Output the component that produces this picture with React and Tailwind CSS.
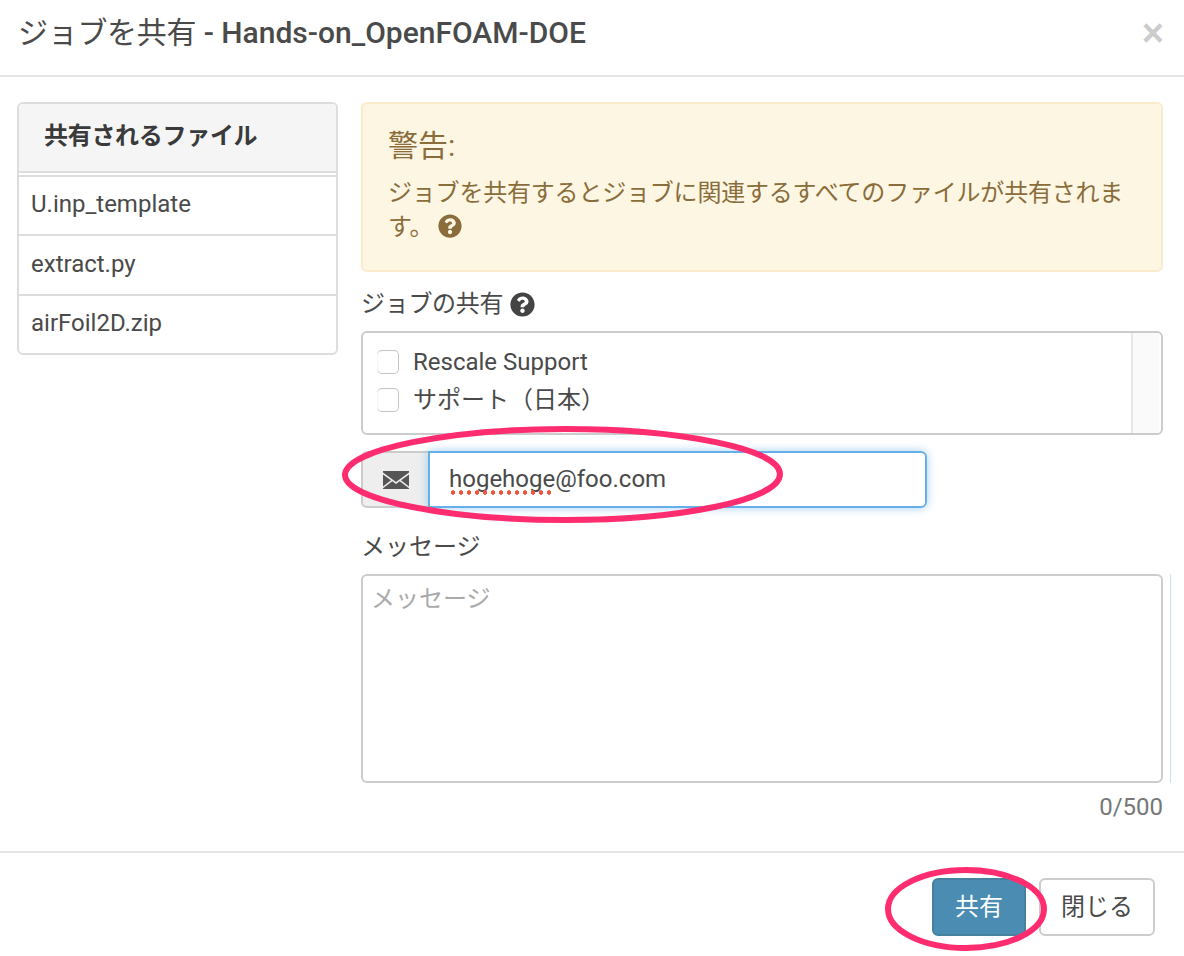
import { FaQuestionCircle } from "react-icons/fa";

const font = "font-['Roboto','Noto_Sans_CJK_JP',sans-serif]";

function Envelope() {
  return (
    <svg width="26" height="18" viewBox="0 0 26 18" fill="#555">
      <path d="M0 1.5 L13 11 L26 1.5 L26 0 L0 0 Z" />
      <path d="M0 3.5 L0 15.5 L8 9.3 Z" />
      <path d="M26 3.5 L26 15.5 L18 9.3 Z" />
      <path d="M9.3 10.3 L0 17.3 L0 18 L26 18 L26 17.3 L16.7 10.3 L13 13 Z" />
    </svg>
  );
}

function CheckRow({ label }) {
  return (
    <div className="flex h-[38px] items-center">
      <span className="h-6 w-[22px] rounded-[5px] border border-l-0 border-[#c4c4c4] bg-white shadow-[inset_1px_0_2px_rgba(0,0,0,0.04)]" />
      <span className="ml-[14px] text-2xl">{label}</span>
    </div>
  );
}

export default function App() {
  return (
    <div className={`${font} relative h-[956px] w-[1184px] overflow-hidden bg-white text-[#4a4a4a]`}>
      <header className="flex h-[77px] items-center justify-between border-b-2 border-[#e5e5e5] pb-[10px] pl-[18px] pr-[20px]">
        <h1 className="text-[30px] font-medium leading-[40px] text-[#4a4a4a]">
          <span className="font-normal tracking-[-0.3px]">ジョブを共有</span> - Hands-on_OpenFOAM-DOE
        </h1>
        <span className="font-['Liberation_Sans',sans-serif] text-[38px] font-bold leading-none text-[#ccc]">×</span>
      </header>

      <main className="flex h-[776px] gap-[23px] border-b-2 border-[#e5e5e5] pl-[17px] pr-[21px] pt-[25px]">
        <aside className="w-[321px] shrink-0">
          <div className="overflow-hidden rounded-[6px] border-2 border-[#ddd]">
            <div className="flex h-[69px] items-center border-b-2 border-[#ddd] bg-[#f5f5f5] pb-[3px] pl-[25px] text-2xl font-bold tracking-[-0.3px] text-[#3a3a3a]">
              共有されるファイル
            </div>
            <div className="mt-[2px] border-t-2 border-[#ddd]">
              {[
                ["U.inp_template", "h-[59px] border-b-2 border-[#ddd]"],
                ["extract.py", "h-[60px] border-b-2 border-[#ddd]"],
                ["airFoil2D.zip", "h-[57px]"],
              ].map(([file, rowClass]) => (
                <div key={file} className={`flex items-center pb-[3px] pl-[12px] text-2xl ${rowClass}`}>
                  {file}
                </div>
              ))}
            </div>
          </div>
        </aside>

        <section className="min-w-0 flex-1">
          <div className="h-[170px] rounded-[6px] border-2 border-[#faebcc] bg-[#fdf6e3] pl-[26px] pr-[20px] pt-[22px] text-[#8a6d3b]">
            <h4 className="-ml-px text-[30px] leading-[40px]">警告:</h4>
            <p className="-ml-px mt-[10px] text-2xl leading-[34px] tracking-[-0.2px]">
              ジョブを共有するとジョブに関連するすべてのファイルが共有されます。
              <FaQuestionCircle className="ml-[5px] inline-block h-6 w-6 align-[-3px] text-[#8a6d3b]" />
            </p>
          </div>

          <label className="mt-[15px] flex h-[34px] items-center gap-[7px] text-2xl tracking-[-0.3px]">
            ジョブの共有
            <FaQuestionCircle className="h-[25px] w-[25px] text-[#444]" />
          </label>

          <div className="mt-[10px] flex h-[104px] justify-between rounded-[6px] border-2 border-[#ccc] pr-[2px]">
            <div className="pl-[14px] pt-[10px]">
              <CheckRow label="Rescale Support" />
              <CheckRow label="サポート（日本）" />
            </div>
            <div className="w-[28px] border-l-2 border-[#e8e8e8] bg-[#fafafa]" />
          </div>

          <div className="mt-[16px] flex h-[57px] w-[566px]">
            <div className="flex w-[67px] items-center justify-center rounded-l-[6px] border-2 border-r-0 border-[#ccc] bg-[#eee]">
              <Envelope />
            </div>
            <div className="flex flex-1 items-center rounded-r-[6px] border-2 border-[#66afe9] pb-[2px] pl-[19px] text-2xl shadow-[0_0_10px_rgba(102,175,233,0.6)]">
              <span className="relative">
                hogehoge
                <span className="absolute left-0 right-0 top-[27px] h-[5px] bg-[radial-gradient(circle,#f2553d_2px,transparent_2.5px)] bg-[length:8px_5px]" />
              </span>
              @foo.com
            </div>
          </div>

          <label className="mt-[20px] block h-[46px] text-2xl leading-[38px]">メッセージ</label>

          <div className="relative">
            <div className="h-[209px] rounded-[6px] border-2 border-[#ccc] pl-[8px] pt-[5px] text-2xl leading-[36px] text-[#aaa]">
              メッセージ
            </div>
            <div className="absolute -right-[8px] top-0 h-[209px] w-px bg-[#cfe2f3]" />
          </div>

          <div className="mt-[9px] text-right text-2xl leading-[30px] text-[#777]">0/500</div>
        </section>
      </main>

      <footer className="flex justify-end gap-[13px] pr-[29px] pt-[25px]">
        <button className="h-[58px] w-[94px] rounded-[6px] border-2 border-[#46829f] bg-[#4b8cb3] text-2xl text-white">共有</button>
        <button className="h-[58px] w-[116px] rounded-[6px] border-2 border-[#ccc] bg-white text-2xl text-[#4a4a4a]">閉じる</button>
      </footer>

      <svg className="absolute left-[340px] top-[424px]" width="446" height="100" viewBox="0 0 446 100" fill="none">
        <path
          d="M5 50 C8 25 110 5 225 5 C340 5 440 25 440 50 C440 76 340 96 225 96 C110 96 3 76 5 50 Z"
          stroke="#ff2d6f"
          strokeWidth="6"
        />
      </svg>
      <svg className="absolute left-[884px] top-[866px]" width="164" height="86" viewBox="0 0 164 86" fill="none">
        <ellipse cx="82" cy="43" rx="78" ry="39" stroke="#ff2d6f" strokeWidth="6" />
      </svg>
    </div>
  );
}
